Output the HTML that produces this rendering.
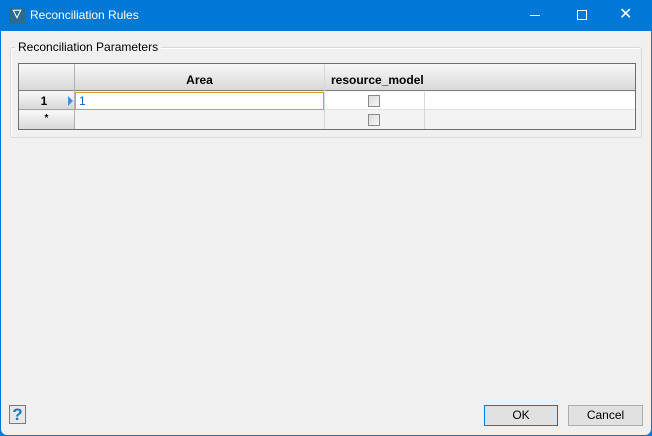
<!DOCTYPE html>
<html><head><style>
*{box-sizing:border-box;margin:0;padding:0}
body{width:652px;height:436px;background:#0078d7;font-family:"Liberation Sans",sans-serif;font-size:12px;position:relative;overflow:hidden}
.a{position:absolute}
.win{left:1px;top:31px;width:650px;height:404px;background:#f0f0f0;border-radius:0 0 6px 6px}
.hdr{background:linear-gradient(#f8f8f8,#d8d8d8);}
.btn{background:#e1e1e1;border:1px solid #adadad;text-align:center;line-height:19px;font-size:12px;color:#000}
.cb{width:12px;height:12px;border:1px solid #8a8a8a;background:linear-gradient(135deg,#dcdcdc,#f6f6f6)}
</style></head><body>
<div class="a" style="left:9px;top:8px;width:16px;height:16px;background:#2a6c90"></div>
<div class="a" style="left:9px;top:7px;width:16px;color:#fff;font-size:11px;text-align:center;font-weight:bold">▽</div>
<div class="a" style="left:30px;top:8px;color:#fff;font-size:12px">Reconciliation Rules</div>
<div class="a" style="left:530px;top:15px;width:10px;height:1px;background:#fff"></div>
<div class="a" style="left:577px;top:10px;width:10px;height:10px;border:1px solid #fff"></div>
<div class="a" style="left:619px;top:4px;color:#fff;font-size:16px">✕</div>
<div class="a win"></div>
<div class="a" style="left:10px;top:47px;width:632px;height:91px;border:1px solid #d8d8d8;border-radius:3px;box-shadow:inset 1px 1px 0 #fff"></div>
<div class="a" style="left:15px;top:40px;background:#f0f0f0;padding:0 3px;font-size:12px;color:#000">Reconciliation Parameters</div>
<div class="a" style="left:18px;top:63px;width:618px;height:67px;border:1px solid #6e6e6e;background:#f3f3f3"></div>
<div class="a hdr" style="left:19px;top:64px;width:616px;height:27px;border-bottom:1px solid #808080"></div>
<div class="a" style="left:75px;top:92px;width:560px;height:18px;background:#fff;border-bottom:1px solid #e0e0e0"></div>
<div class="a" style="left:74px;top:64px;width:1px;height:65px;background:#b0b0b0"></div>
<div class="a" style="left:324px;top:64px;width:1px;height:65px;background:#d8d8d8"></div>
<div class="a" style="left:424px;top:92px;width:1px;height:37px;background:#d8d8d8"></div>
<div class="a" style="left:75px;top:73px;width:249px;text-align:center;font-weight:bold">Area</div>
<div class="a" style="left:331px;top:73px;font-weight:bold">resource_model</div>
<div class="a" style="left:75px;top:92px;width:249px;height:18px;border:1px solid #d7a22a;background:#fff"></div>
<div class="a" style="left:79px;top:94px;color:#1a5fb4">1</div>
<div class="a hdr" style="left:19px;top:92px;width:55px;height:18px;border-bottom:1px solid #a0a0a0"></div>
<div class="a hdr" style="left:19px;top:111px;width:55px;height:18px"></div>
<div class="a" style="left:19px;top:94px;width:50px;text-align:center;font-weight:bold">1</div>
<div class="a" style="left:68px;top:96px;width:0;height:0;border-left:5px solid #4a90d0;border-top:5px solid transparent;border-bottom:5px solid transparent"></div>
<div class="a" style="left:19px;top:113px;width:55px;text-align:center;font-size:10px;font-weight:bold">*</div>
<div class="a cb" style="left:368px;top:95px"></div>
<div class="a cb" style="left:368px;top:114px"></div>
<div class="a" style="left:9px;top:405px;width:17px;height:19px;border:1px solid #7a7a7a;background:#e8e8e8;color:#1878b8;font-weight:bold;font-size:17px;text-align:center;line-height:18px">?</div>
<div class="a btn" style="left:484px;top:405px;width:74px;height:21px;border-color:#0078d7">OK</div>
<div class="a btn" style="left:568px;top:405px;width:75px;height:21px">Cancel</div>
</body></html>
